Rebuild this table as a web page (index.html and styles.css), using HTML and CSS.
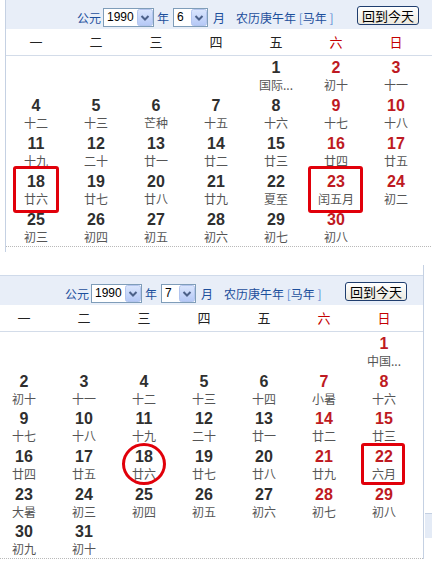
FILE: index.html
```html
<!DOCTYPE html>
<html lang="zh-CN">
<head>
<meta charset="utf-8">
<title>万年历</title>
<link rel="stylesheet" href="styles.css">
</head>
<body>
<section class="cal cal-june">
  <div class="cal-head">
    <span class="lbl">公元</span>
    <span class="sel sel-year"><span class="sel-val">1990</span><span class="sel-btn"><svg width="16" height="17" viewBox="0 0 16 17"><defs><linearGradient id="g1" x1="0" y1="0" x2="0" y2="1"><stop offset="0" stop-color="#dbe6fd"/><stop offset="1" stop-color="#b4c8f6"/></linearGradient></defs><rect x="0.5" y="0.5" width="15" height="16" rx="2" fill="url(#g1)" stroke="#b3c5ee"/><path d="M4.5 7 L8 10.5 L11.5 7" fill="none" stroke="#4c6189" stroke-width="2"/></svg></span></span>
    <span class="lbl lbl-year">年</span>
    <span class="sel sel-month"><span class="sel-val">6</span><span class="sel-btn"><svg width="16" height="17" viewBox="0 0 16 17"><rect x="0.5" y="0.5" width="15" height="16" rx="2" fill="url(#g1)" stroke="#b3c5ee"/><path d="M4.5 7 L8 10.5 L11.5 7" fill="none" stroke="#4c6189" stroke-width="2"/></svg></span></span>
    <span class="lbl lbl-month">月</span>
    <span class="lunar-year">农历庚午年 <span class="br">[</span>马年 <span class="br">]</span></span>
    <span class="today-btn">回到今天</span>
  </div>
  <div class="weekdays">
    <span>一</span><span>二</span><span>三</span><span>四</span><span>五</span><span class="we">六</span><span class="we">日</span>
  </div>
  <div class="days">
    <div class="day"></div><div class="day"></div><div class="day"></div><div class="day"></div>
    <div class="day"><div class="num">1</div><div class="lun">国际...</div></div>
    <div class="day we"><div class="num">2</div><div class="lun">初十</div></div>
    <div class="day we"><div class="num">3</div><div class="lun">十一</div></div>

    <div class="day"><div class="num">4</div><div class="lun">十二</div></div>
    <div class="day"><div class="num">5</div><div class="lun">十三</div></div>
    <div class="day"><div class="num">6</div><div class="lun">芒种</div></div>
    <div class="day"><div class="num">7</div><div class="lun">十五</div></div>
    <div class="day"><div class="num">8</div><div class="lun">十六</div></div>
    <div class="day we"><div class="num">9</div><div class="lun">十七</div></div>
    <div class="day we"><div class="num">10</div><div class="lun">十八</div></div>

    <div class="day"><div class="num">11</div><div class="lun">十九</div></div>
    <div class="day"><div class="num">12</div><div class="lun">二十</div></div>
    <div class="day"><div class="num">13</div><div class="lun">廿一</div></div>
    <div class="day"><div class="num">14</div><div class="lun">廿二</div></div>
    <div class="day"><div class="num">15</div><div class="lun">廿三</div></div>
    <div class="day we"><div class="num">16</div><div class="lun">廿四</div></div>
    <div class="day we"><div class="num">17</div><div class="lun">廿五</div></div>

    <div class="day"><div class="num">18</div><div class="lun">廿六</div></div>
    <div class="day"><div class="num">19</div><div class="lun">廿七</div></div>
    <div class="day"><div class="num">20</div><div class="lun">廿八</div></div>
    <div class="day"><div class="num">21</div><div class="lun">廿九</div></div>
    <div class="day"><div class="num">22</div><div class="lun">夏至</div></div>
    <div class="day we"><div class="num">23</div><div class="lun">闰五月</div></div>
    <div class="day we"><div class="num">24</div><div class="lun">初二</div></div>

    <div class="day"><div class="num">25</div><div class="lun">初三</div></div>
    <div class="day"><div class="num">26</div><div class="lun">初四</div></div>
    <div class="day"><div class="num">27</div><div class="lun">初五</div></div>
    <div class="day"><div class="num">28</div><div class="lun">初六</div></div>
    <div class="day"><div class="num">29</div><div class="lun">初七</div></div>
    <div class="day we"><div class="num">30</div><div class="lun">初八</div></div>
    <div class="day"></div>
  </div>
</section>

<section class="cal cal-july">
  <div class="cal-head">
    <span class="lbl">公元</span>
    <span class="sel sel-year"><span class="sel-val">1990</span><span class="sel-btn"><svg width="16" height="17" viewBox="0 0 16 17"><rect x="0.5" y="0.5" width="15" height="16" rx="2" fill="url(#g1)" stroke="#b3c5ee"/><path d="M4.5 7 L8 10.5 L11.5 7" fill="none" stroke="#4c6189" stroke-width="2"/></svg></span></span>
    <span class="lbl lbl-year">年</span>
    <span class="sel sel-month"><span class="sel-val">7</span><span class="sel-btn"><svg width="16" height="17" viewBox="0 0 16 17"><rect x="0.5" y="0.5" width="15" height="16" rx="2" fill="url(#g1)" stroke="#b3c5ee"/><path d="M4.5 7 L8 10.5 L11.5 7" fill="none" stroke="#4c6189" stroke-width="2"/></svg></span></span>
    <span class="lbl lbl-month">月</span>
    <span class="lunar-year">农历庚午年 <span class="br">[</span>马年 <span class="br">]</span></span>
    <span class="today-btn">回到今天</span>
  </div>
  <div class="weekdays">
    <span>一</span><span>二</span><span>三</span><span>四</span><span>五</span><span class="we">六</span><span class="we">日</span>
  </div>
  <div class="days">
    <div class="day"></div><div class="day"></div><div class="day"></div><div class="day"></div><div class="day"></div><div class="day"></div>
    <div class="day we"><div class="num">1</div><div class="lun">中国...</div></div>

    <div class="day"><div class="num">2</div><div class="lun">初十</div></div>
    <div class="day"><div class="num">3</div><div class="lun">十一</div></div>
    <div class="day"><div class="num">4</div><div class="lun">十二</div></div>
    <div class="day"><div class="num">5</div><div class="lun">十三</div></div>
    <div class="day"><div class="num">6</div><div class="lun">十四</div></div>
    <div class="day we"><div class="num">7</div><div class="lun">小暑</div></div>
    <div class="day we"><div class="num">8</div><div class="lun">十六</div></div>

    <div class="day"><div class="num">9</div><div class="lun">十七</div></div>
    <div class="day"><div class="num">10</div><div class="lun">十八</div></div>
    <div class="day"><div class="num">11</div><div class="lun">十九</div></div>
    <div class="day"><div class="num">12</div><div class="lun">二十</div></div>
    <div class="day"><div class="num">13</div><div class="lun">廿一</div></div>
    <div class="day we"><div class="num">14</div><div class="lun">廿二</div></div>
    <div class="day we"><div class="num">15</div><div class="lun">廿三</div></div>

    <div class="day"><div class="num">16</div><div class="lun">廿四</div></div>
    <div class="day"><div class="num">17</div><div class="lun">廿五</div></div>
    <div class="day"><div class="num">18</div><div class="lun">廿六</div></div>
    <div class="day"><div class="num">19</div><div class="lun">廿七</div></div>
    <div class="day"><div class="num">20</div><div class="lun">廿八</div></div>
    <div class="day we"><div class="num">21</div><div class="lun">廿九</div></div>
    <div class="day we"><div class="num">22</div><div class="lun">六月</div></div>

    <div class="day"><div class="num">23</div><div class="lun">大暑</div></div>
    <div class="day"><div class="num">24</div><div class="lun">初三</div></div>
    <div class="day"><div class="num">25</div><div class="lun">初四</div></div>
    <div class="day"><div class="num">26</div><div class="lun">初五</div></div>
    <div class="day"><div class="num">27</div><div class="lun">初六</div></div>
    <div class="day we"><div class="num">28</div><div class="lun">初七</div></div>
    <div class="day we"><div class="num">29</div><div class="lun">初八</div></div>

    <div class="day"><div class="num">30</div><div class="lun">初九</div></div>
    <div class="day"><div class="num">31</div><div class="lun">初十</div></div>
    <div class="day"></div><div class="day"></div><div class="day"></div><div class="day"></div><div class="day"></div>
  </div>
</section>

<div class="mark mark-box mark-j18"></div>
<div class="mark mark-box mark-j23"></div>
<div class="mark mark-circle mark-l18"></div>
<div class="mark mark-box mark-l22"></div>
<div class="edge-bit"></div>
</body>
</html>
```

FILE: styles.css
```css
html, body {
  margin: 0;
  padding: 0;
}

body {
  width: 432px;
  height: 565px;
  overflow: hidden;
  position: relative;
  background: #ffffff;
  font-family: "Liberation Sans", "Noto Sans CJK SC", sans-serif;
  color: #333333;
}

.cal {
  width: 431px;
  box-sizing: border-box;
  border-left: 1px solid #c5d1e3;
  border-right: 1px solid #c5d1e3;
}

.cal-june {
  margin-left: 5px;
  margin-top: -1px;
  padding-bottom: 5px;
}

.cal-july {
  margin-left: -7px;
  margin-top: 13px;
  padding-top: 10px;
}

/* header bar */
.cal-head {
  height: 30px;
  box-sizing: border-box;
  border-top: 1px solid #cfdaea;
  background: #e8eef8;
  display: flex;
  align-items: center;
  padding: 6px 16px 0 71px;
  font-family: "Noto Sans CJK SC", sans-serif;
  font-size: 12px;
  color: #1d4f9c;
}

.lbl {
  line-height: 19px;
}

.lbl-year {
  margin-left: 3px;
}

.lbl-month {
  margin-left: 5px;
}

.sel {
  display: flex;
  align-items: center;
  justify-content: space-between;
  height: 19px;
  box-sizing: border-box;
  border: 1px solid #7f9db9;
  background: #ffffff;
  padding-right: 0;
}

.sel-year {
  width: 51px;
  margin-left: 2px;
}

.sel-month {
  width: 35px;
  margin-left: 4px;
}

.sel-val {
  font-family: "Liberation Sans", sans-serif;
  font-size: 12px;
  color: #000000;
  padding-left: 3px;
  line-height: 17px;
}

.sel-btn {
  display: flex;
  width: 16px;
  height: 17px;
}

.lunar-year {
  margin-left: 11px;
  line-height: 19px;
}

.br {
  color: #5a8ad2;
}

.today-btn {
  margin-left: auto;
  align-self: flex-start;
  height: 19px;
  box-sizing: border-box;
  padding: 0 4px;
  border: 1px solid #1f3d6e;
  border-radius: 3px;
  background: linear-gradient(#ffffff, #ece9df);
  font-size: 13px;
  line-height: 17px;
  color: #000000;
}

/* weekday row */
.weekdays {
  display: grid;
  grid-template-columns: repeat(7, 60px);
  height: 27px;
  box-sizing: border-box;
  border-bottom: 1px solid #d3dce9;
  font-family: "Noto Sans CJK SC", sans-serif;
  font-size: 13px;
  line-height: 26px;
  color: #222222;
  text-align: center;
}

.weekdays .we {
  color: #c40000;
}

/* day grid */
.days {
  display: grid;
  grid-template-columns: repeat(7, 60px);
  grid-auto-rows: 38px;
  border-bottom: 1px dotted #b9b9b9;
}

.cal-july .days {
  grid-auto-rows: 37.7px;
}

.day {
  box-sizing: border-box;
  padding-top: 3px;
  text-align: center;
}

.num {
  font-family: "Liberation Sans", sans-serif;
  font-weight: bold;
  font-size: 16px;
  line-height: 18px;
  color: #2f2f2f;
}

.day.we .num {
  color: #be1a22;
}

.lun {
  font-family: "Noto Sans CJK SC", sans-serif;
  font-size: 12px;
  line-height: 16px;
  color: #555555;
}

/* red annotations drawn over the calendars */
.mark {
  position: absolute;
  box-sizing: border-box;
  border: 3px solid #e1000a;
}

.mark-box {
  border-radius: 3px;
}

.mark-circle {
  border-radius: 50%;
}

.mark-j18 {
  left: 13px;
  top: 166px;
  width: 46px;
  height: 47px;
}

.mark-j23 {
  left: 308px;
  top: 166px;
  width: 55px;
  height: 47px;
}

.mark-l18 {
  left: 122px;
  top: 443px;
  width: 44px;
  height: 42px;
}

.mark-l22 {
  left: 361px;
  top: 443px;
  width: 44px;
  height: 42px;
}

.edge-bit {
  position: absolute;
  left: 425px;
  top: 513px;
  width: 7px;
  height: 24px;
  background: #e4ebf6;
  border-top: 1px solid #c4d0e2;
}
```
